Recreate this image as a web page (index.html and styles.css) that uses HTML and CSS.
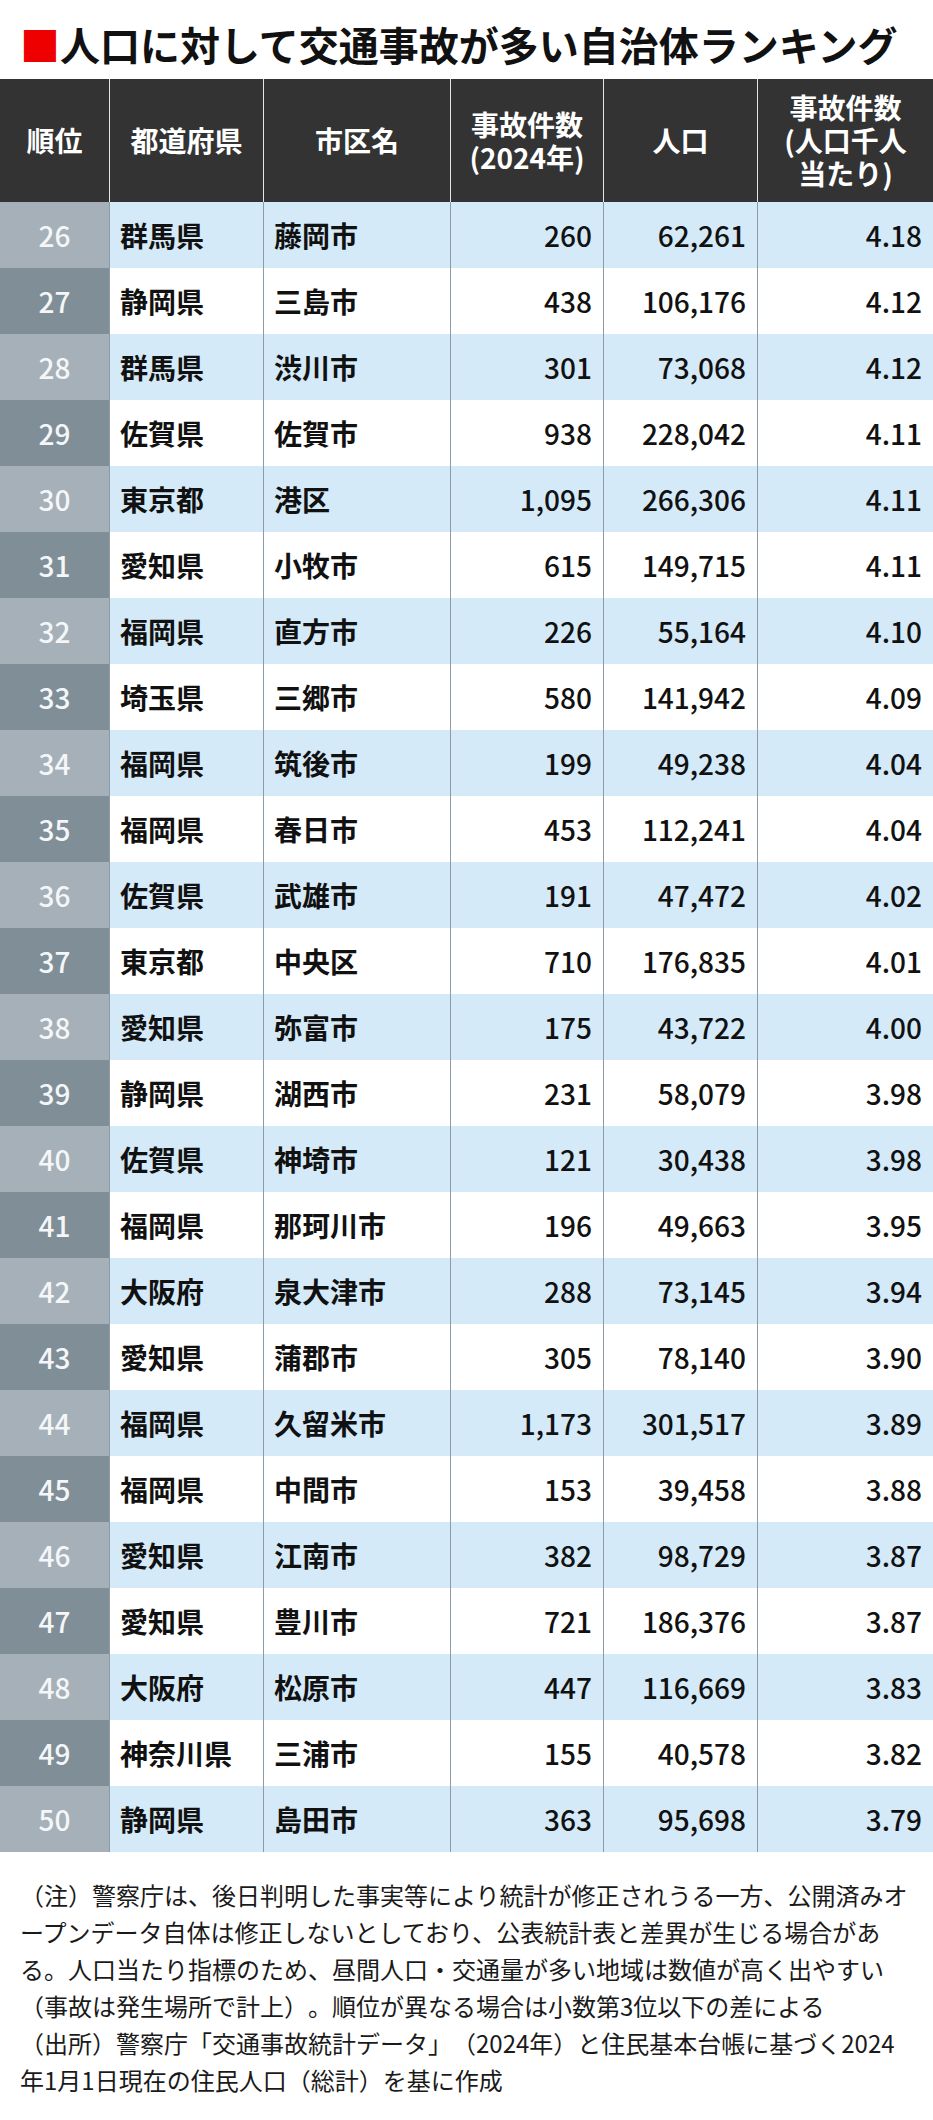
FILE: index.html
```html
<!DOCTYPE html>
<html lang="ja">
<head>
<meta charset="utf-8">
<title>人口に対して交通事故が多い自治体ランキング</title>
<link rel="stylesheet" href="styles.css">
</head>
<body>
<h1 class="title"><span class="mark">■</span>人口に対して交通事故が多い自治体ランキング</h1>
<div class="table">
  <div class="row head">
    <div class="cell">順位</div>
    <div class="cell">都道府県</div>
    <div class="cell">市区名</div>
    <div class="cell">事故件数<br>(2024年)</div>
    <div class="cell">人口</div>
    <div class="cell">事故件数<br>(人口千人<br>当たり)</div>
  </div>
  <div class="row odd"><div class="cell rank">26</div><div class="cell name">群馬県</div><div class="cell name">藤岡市</div><div class="cell num">260</div><div class="cell num">62,261</div><div class="cell num">4.18</div></div>
  <div class="row even"><div class="cell rank">27</div><div class="cell name">静岡県</div><div class="cell name">三島市</div><div class="cell num">438</div><div class="cell num">106,176</div><div class="cell num">4.12</div></div>
  <div class="row odd"><div class="cell rank">28</div><div class="cell name">群馬県</div><div class="cell name">渋川市</div><div class="cell num">301</div><div class="cell num">73,068</div><div class="cell num">4.12</div></div>
  <div class="row even"><div class="cell rank">29</div><div class="cell name">佐賀県</div><div class="cell name">佐賀市</div><div class="cell num">938</div><div class="cell num">228,042</div><div class="cell num">4.11</div></div>
  <div class="row odd"><div class="cell rank">30</div><div class="cell name">東京都</div><div class="cell name">港区</div><div class="cell num">1,095</div><div class="cell num">266,306</div><div class="cell num">4.11</div></div>
  <div class="row even"><div class="cell rank">31</div><div class="cell name">愛知県</div><div class="cell name">小牧市</div><div class="cell num">615</div><div class="cell num">149,715</div><div class="cell num">4.11</div></div>
  <div class="row odd"><div class="cell rank">32</div><div class="cell name">福岡県</div><div class="cell name">直方市</div><div class="cell num">226</div><div class="cell num">55,164</div><div class="cell num">4.10</div></div>
  <div class="row even"><div class="cell rank">33</div><div class="cell name">埼玉県</div><div class="cell name">三郷市</div><div class="cell num">580</div><div class="cell num">141,942</div><div class="cell num">4.09</div></div>
  <div class="row odd"><div class="cell rank">34</div><div class="cell name">福岡県</div><div class="cell name">筑後市</div><div class="cell num">199</div><div class="cell num">49,238</div><div class="cell num">4.04</div></div>
  <div class="row even"><div class="cell rank">35</div><div class="cell name">福岡県</div><div class="cell name">春日市</div><div class="cell num">453</div><div class="cell num">112,241</div><div class="cell num">4.04</div></div>
  <div class="row odd"><div class="cell rank">36</div><div class="cell name">佐賀県</div><div class="cell name">武雄市</div><div class="cell num">191</div><div class="cell num">47,472</div><div class="cell num">4.02</div></div>
  <div class="row even"><div class="cell rank">37</div><div class="cell name">東京都</div><div class="cell name">中央区</div><div class="cell num">710</div><div class="cell num">176,835</div><div class="cell num">4.01</div></div>
  <div class="row odd"><div class="cell rank">38</div><div class="cell name">愛知県</div><div class="cell name">弥富市</div><div class="cell num">175</div><div class="cell num">43,722</div><div class="cell num">4.00</div></div>
  <div class="row even"><div class="cell rank">39</div><div class="cell name">静岡県</div><div class="cell name">湖西市</div><div class="cell num">231</div><div class="cell num">58,079</div><div class="cell num">3.98</div></div>
  <div class="row odd"><div class="cell rank">40</div><div class="cell name">佐賀県</div><div class="cell name">神埼市</div><div class="cell num">121</div><div class="cell num">30,438</div><div class="cell num">3.98</div></div>
  <div class="row even"><div class="cell rank">41</div><div class="cell name">福岡県</div><div class="cell name">那珂川市</div><div class="cell num">196</div><div class="cell num">49,663</div><div class="cell num">3.95</div></div>
  <div class="row odd"><div class="cell rank">42</div><div class="cell name">大阪府</div><div class="cell name">泉大津市</div><div class="cell num">288</div><div class="cell num">73,145</div><div class="cell num">3.94</div></div>
  <div class="row even"><div class="cell rank">43</div><div class="cell name">愛知県</div><div class="cell name">蒲郡市</div><div class="cell num">305</div><div class="cell num">78,140</div><div class="cell num">3.90</div></div>
  <div class="row odd"><div class="cell rank">44</div><div class="cell name">福岡県</div><div class="cell name">久留米市</div><div class="cell num">1,173</div><div class="cell num">301,517</div><div class="cell num">3.89</div></div>
  <div class="row even"><div class="cell rank">45</div><div class="cell name">福岡県</div><div class="cell name">中間市</div><div class="cell num">153</div><div class="cell num">39,458</div><div class="cell num">3.88</div></div>
  <div class="row odd"><div class="cell rank">46</div><div class="cell name">愛知県</div><div class="cell name">江南市</div><div class="cell num">382</div><div class="cell num">98,729</div><div class="cell num">3.87</div></div>
  <div class="row even"><div class="cell rank">47</div><div class="cell name">愛知県</div><div class="cell name">豊川市</div><div class="cell num">721</div><div class="cell num">186,376</div><div class="cell num">3.87</div></div>
  <div class="row odd"><div class="cell rank">48</div><div class="cell name">大阪府</div><div class="cell name">松原市</div><div class="cell num">447</div><div class="cell num">116,669</div><div class="cell num">3.83</div></div>
  <div class="row even"><div class="cell rank">49</div><div class="cell name">神奈川県</div><div class="cell name">三浦市</div><div class="cell num">155</div><div class="cell num">40,578</div><div class="cell num">3.82</div></div>
  <div class="row odd"><div class="cell rank">50</div><div class="cell name">静岡県</div><div class="cell name">島田市</div><div class="cell num">363</div><div class="cell num">95,698</div><div class="cell num">3.79</div></div>
</div>
<div class="notes">
  <p>（注）警察庁は、後日判明した事実等により統計が修正されうる一方、公開済みオープンデータ自体は修正しないとしており、公表統計表と差異が生じる場合がある。人口当たり指標のため、昼間人口・交通量が多い地域は数値が高く出やすい（事故は発生場所で計上）。順位が異なる場合は小数第3位以下の差による</p>
  <p>（出所）警察庁「交通事故統計データ」（2024年）と住民基本台帳に基づく2024年1月1日現在の住民人口（総計）を基に作成</p>
</div>
</body>
</html>
```
FILE: styles.css
```css
html, body {
  margin: 0;
  padding: 0;
  background: #ffffff;
}
body {
  width: 933px;
  font-family: "Noto Sans CJK JP", "Noto Sans", sans-serif;
  color: #111111;
}
.title {
  margin: 0;
  padding: 20px 0 11px 20px;
  font-size: 40px;
  line-height: 48px;
  font-weight: 700;
  color: #111111;
  white-space: nowrap;
}
.mark {
  color: #ee0000;
}
.table {
  width: 933px;
}
.row {
  display: grid;
  grid-template-columns: 109px 154px 187px 153px 154px 176px;
  height: 66px;
}
.row.head {
  height: 123px;
  background: #333333;
}
.cell {
  box-sizing: border-box;
  display: flex;
  align-items: center;
  font-size: 28px;
  font-weight: 700;
  line-height: 33px;
}
.cell + .cell {
  border-left: 1px solid #8d9ba6;
}
.head .cell {
  color: #ffffff;
  justify-content: center;
  text-align: center;
}
.head .cell + .cell {
  border-left: 1px solid #e6e6e6;
}
.odd {
  background: #d4eaf8;
}
.even {
  background: #ffffff;
}
.rank {
  justify-content: center;
  color: #f4f6f7;
  font-weight: 500;
}
.odd .rank {
  background: #a5b0b8;
}
.even .rank {
  background: #808e98;
}
.name {
  padding-left: 10px;
}
.num {
  justify-content: flex-end;
  padding-right: 11px;
  font-weight: 500;
}
.notes {
  padding: 24px 20px 0 20px;
  font-size: 24px;
  line-height: 37px;
  color: #1a1a1a;
  line-break: normal;
  text-spacing-trim: space-all;
}
.notes p {
  margin: 0;
}
```
